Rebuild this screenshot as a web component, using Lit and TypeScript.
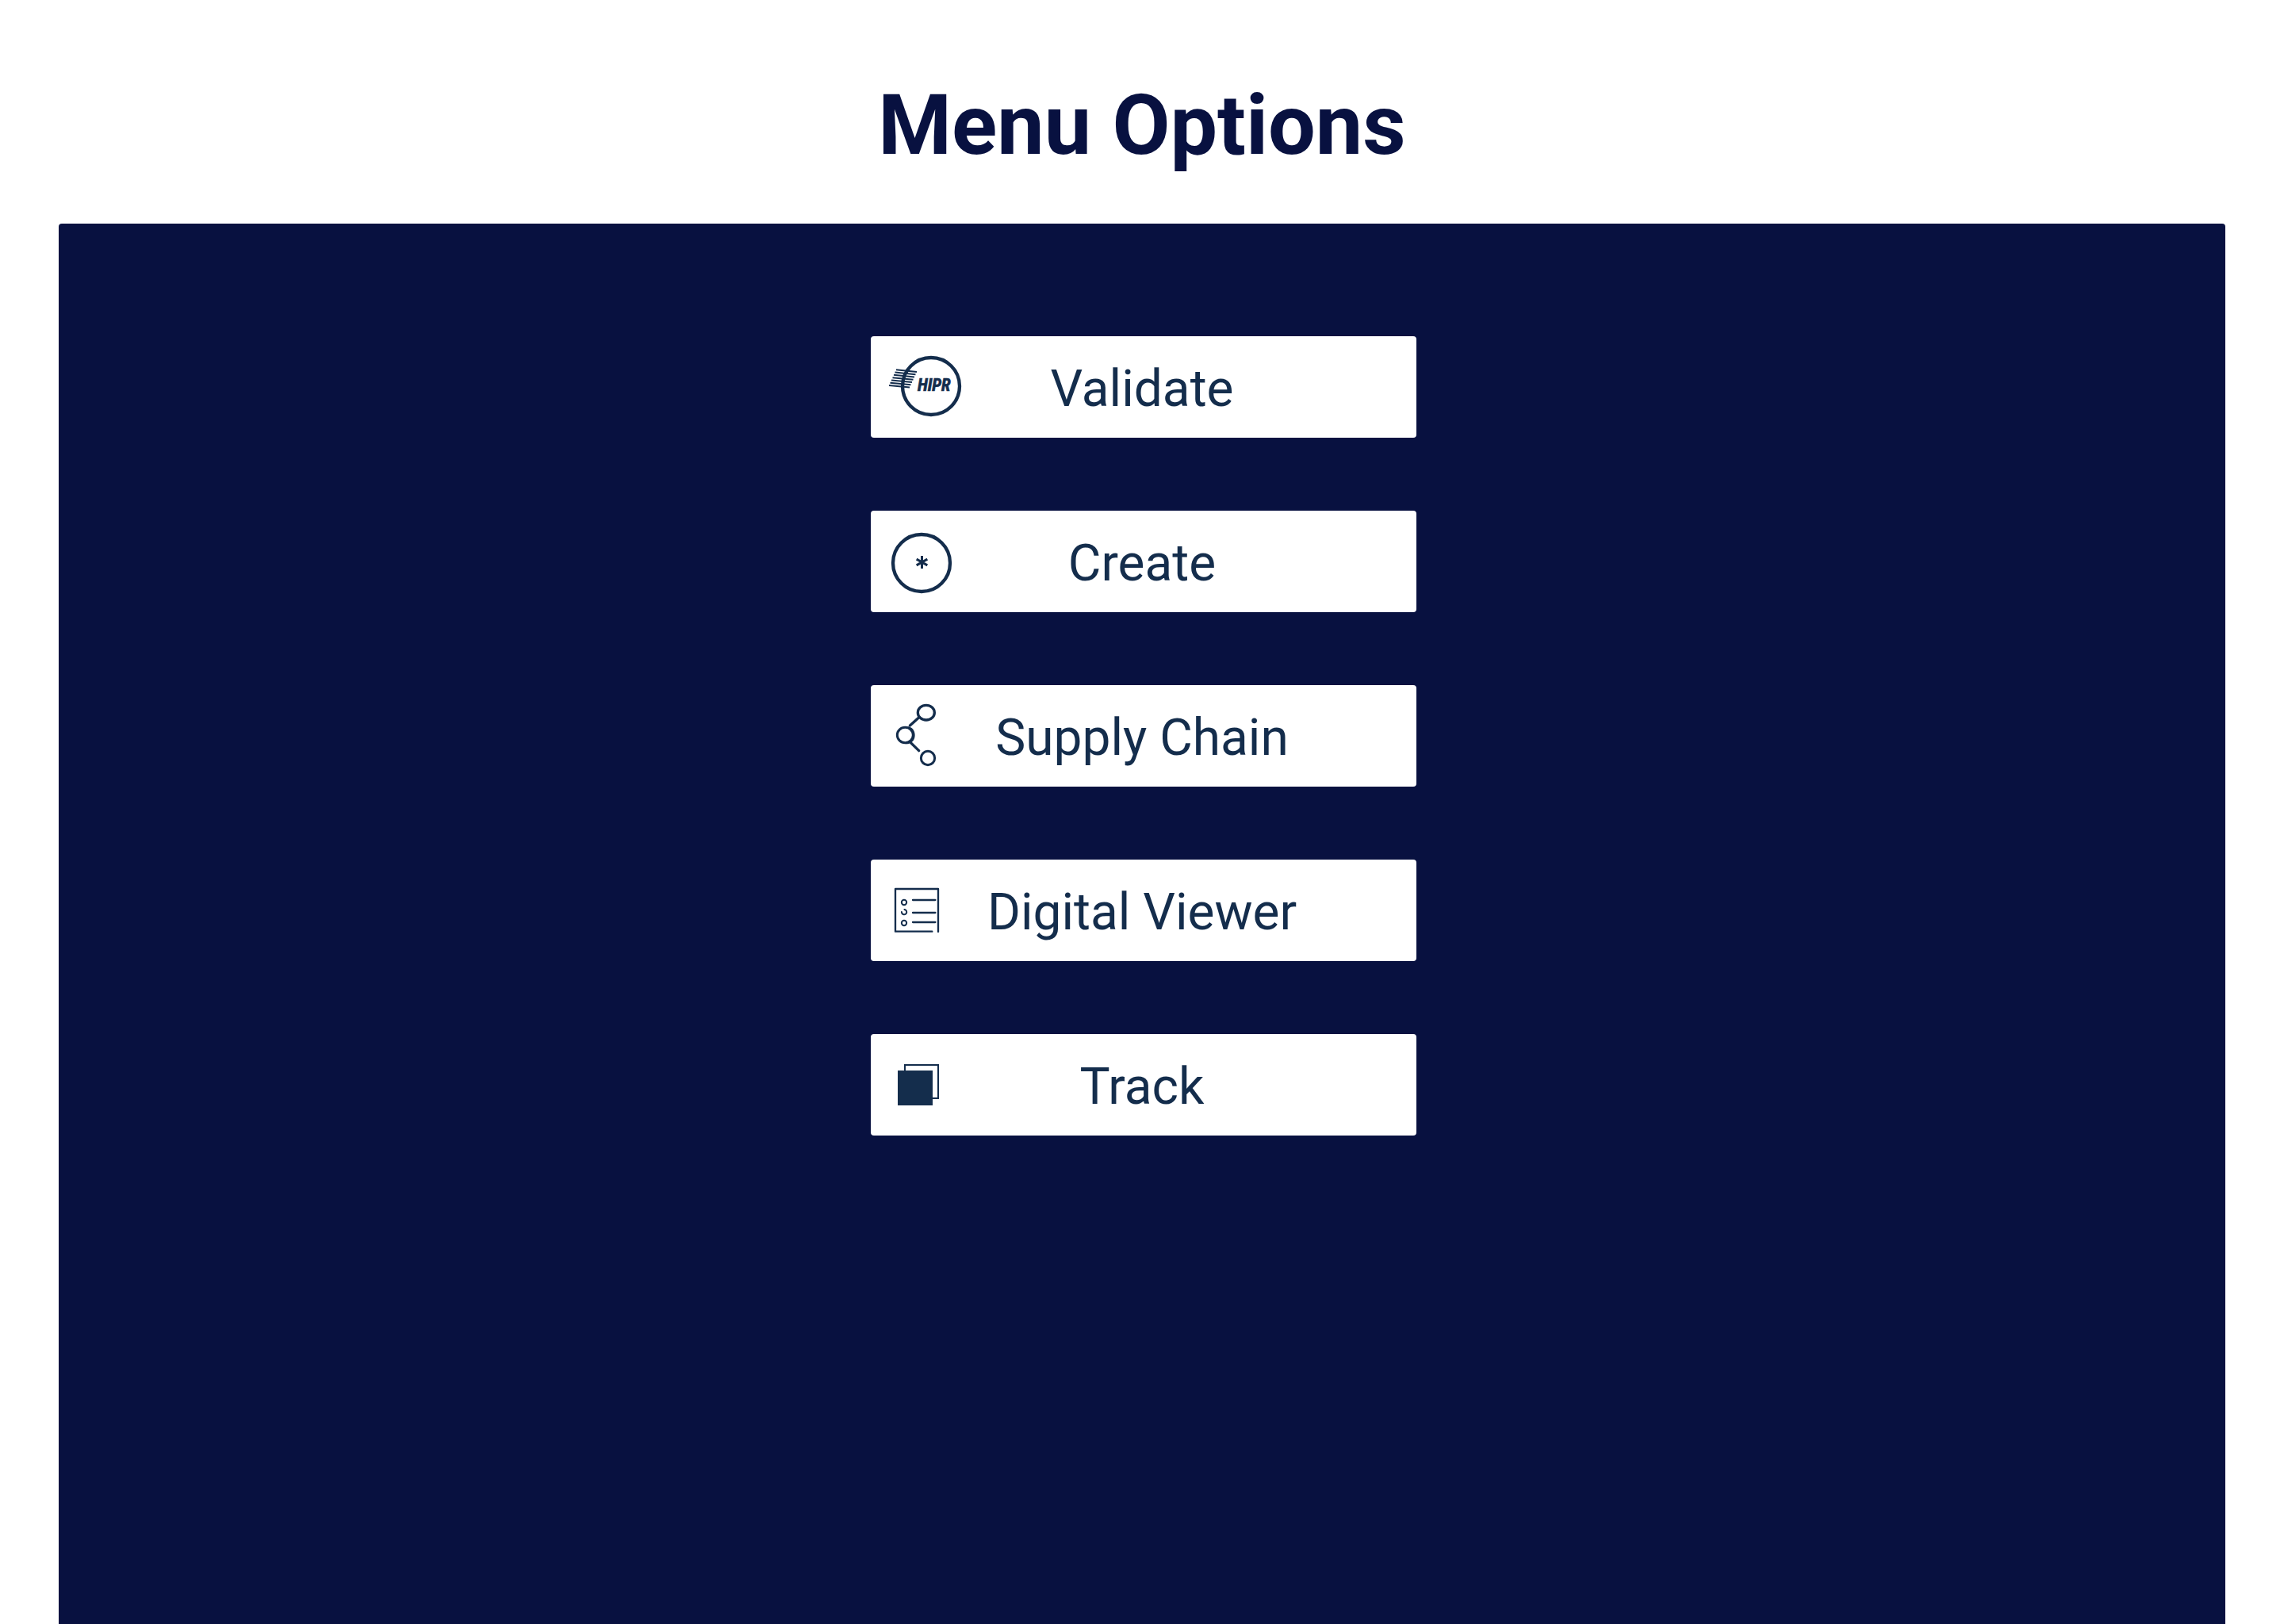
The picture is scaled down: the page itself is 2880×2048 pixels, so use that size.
import { LitElement, html, css, svg, type SVGTemplateResult } from "lit";
import { customElement, property } from "lit/decorators.js";

const hatchLines = [0, 1, 2, 3, 4, 5, 6].map((i) => {
  const x = 120 - i * 4.5;
  const y = 154 + i * 9.8;
  return svg`<line x1=${x} y1=${y} x2=${x + 78} y2=${y + 8} stroke-width="6" />`;
});

const icons: Record<string, SVGTemplateResult> = {
  validate: svg`
    <circle cx="252" cy="216" r="108" stroke-width="13" />
    ${hatchLines}
    <text class="mark" x="201" y="234">HIPR</text>`,
  create: svg`
    <circle cx="216" cy="225" r="108" stroke-width="13" />
    <path d="M217.500 198v48M197 210.500l41 23M238 210.500l-41 23" stroke-width="9" />`,
  chain: svg`
    <ellipse cx="233.500" cy="131" rx="31.500" ry="28" stroke-width="10" />
    <ellipse cx="154" cy="216" rx="30" ry="29" stroke-width="9" />
    <path d="M160 183C180 184 191 198 191 216C191 238 176 251 154 250C172 246 183 234 183 216C183 200 174 187 160 183z" class="solid" stroke-width="2" />
    <circle cx="240" cy="303" r="26" stroke-width="9" />
    <path d="M208 148l-36 32M172 242l34 33" stroke-width="10" stroke-linecap="round" />`,
  viewer: svg`
    <path d="M256 299H117V138H279V300" stroke-width="7" stroke-linecap="round" stroke-linejoin="round" />
    <path d="M183 180h85M183 228h85M183 264h85" stroke-width="7" stroke-linecap="round" />
    <circle cx="150" cy="189" r="9.500" stroke-width="6" />
    <path d="M149 216a9.500 9.500 0 1 1-8 7" stroke-width="6" />
    <circle cx="150" cy="267" r="9.500" stroke-width="6" />`,
  track: svg`
    <rect x="153" y="144" width="126" height="126" stroke-width="6" />
    <rect x="126" y="165" width="132" height="132" class="solid" />`,
};

@customElement("menu-option")
class MenuOption extends LitElement {
  @property() icon = "";
  @property() label = "";

  static styles = css`
    :host {
      display: block;
    }
    .option {
      display: grid;
      grid-template-columns: 100%;
      align-items: center;
      width: 100%;
      height: 128px;
      margin: 0;
      padding: 0;
      border: 0;
      border-radius: 4px;
      background: #ffffff;
      color: #142d4c;
      font: 400 64px/72px Roboto, "Liberation Sans", sans-serif;
      cursor: pointer;
    }
    .icon,
    .label {
      grid-area: 1 / 1;
    }
    .icon {
      width: 128px;
      height: 128px;
      fill: none;
      stroke: #142d4c;
    }
    .icon .solid {
      fill: #142d4c;
      stroke: none;
    }
    .icon .mark {
      fill: #142d4c;
      stroke: #142d4c;
      stroke-width: 2px;
      font: italic 700 64px "Liberation Sans Narrow", "Roboto Condensed", Roboto, sans-serif;
    }
    .label {
      padding: 6px 4px 0 0;
      text-align: center;
    }
  `;

  render() {
    return html`
      <button class="option" type="button">
        <svg class="icon" viewBox="24 27 384 384" aria-hidden="true">${icons[this.icon]}</svg>
        <span class="label">${this.label}</span>
      </button>
    `;
  }
}

@customElement("app-root")
class AppRoot extends LitElement {
  private options = [
    { icon: "validate", label: "Validate" },
    { icon: "create", label: "Create" },
    { icon: "chain", label: "Supply Chain" },
    { icon: "viewer", label: "Digital Viewer" },
    { icon: "track", label: "Track" },
  ];

  static styles = css`
    :host {
      display: flex;
      flex-direction: column;
      box-sizing: border-box;
      min-height: 100vh;
      padding: 0 74px;
      background: #ffffff;
    }
    .title {
      margin: 0;
      padding: 96px 0 62px;
      color: #081140;
      font: 700 106px/124px Roboto, "Liberation Sans", sans-serif;
      text-align: center;
    }
    .panel {
      flex: 1;
      display: flex;
      flex-direction: column;
      align-items: center;
      gap: 92px;
      padding: 142px 20px 92px 24px;
      border-radius: 4px 4px 0 0;
      background: #081140;
    }
    .item {
      width: 100%;
      max-width: 688px;
    }
  `;

  render() {
    return html`
      <h1 class="title">Menu Options</h1>
      <main class="panel">
        ${this.options.map(
          (o) => html`<menu-option class="item" .icon=${o.icon} .label=${o.label}></menu-option>`
        )}
      </main>
    `;
  }
}
